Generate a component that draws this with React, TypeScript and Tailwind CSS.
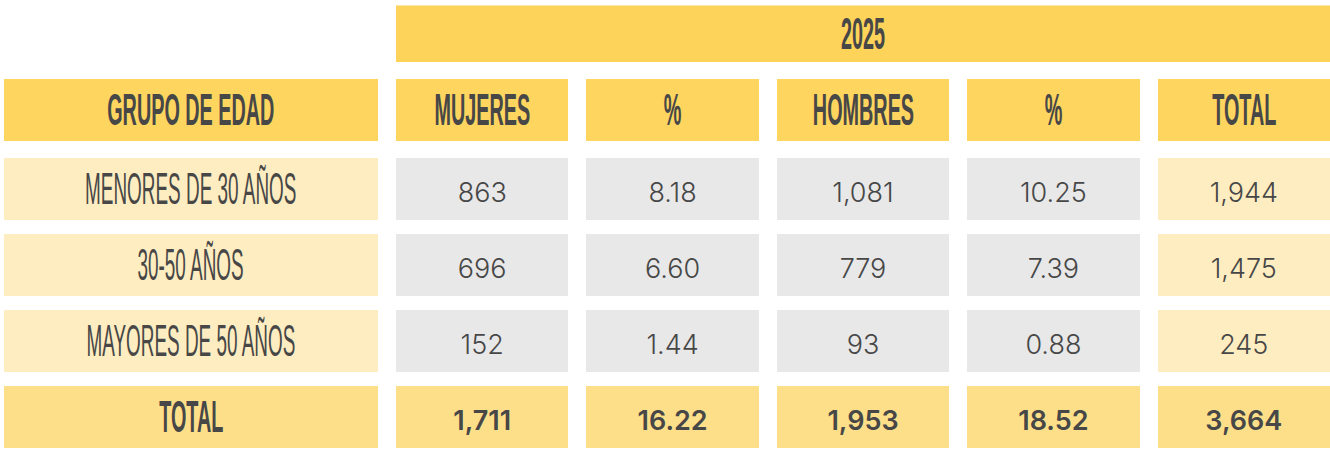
const rows = [
  { label: "MENORES DE 30 AÑOS", values: ["863", "8.18", "1,081", "10.25", "1,944"] },
  { label: "30-50 AÑOS", values: ["696", "6.60", "779", "7.39", "1,475"] },
  { label: "MAYORES DE 50 AÑOS", values: ["152", "1.44", "93", "0.88", "245"] },
];

const totals = ["1,711", "16.22", "1,953", "18.52", "3,664"];
const headers = ["MUJERES", "%", "HOMBRES", "%", "TOTAL"];

/** Narrow display type: Liberation Sans squeezed on x. */
function Cond({ children, bold }: { children: React.ReactNode; bold?: boolean }) {
  return (
    <span
      className={`inline-block origin-center whitespace-nowrap font-['Liberation_Sans',sans-serif] text-[44px] leading-none ${
        bold ? "scale-x-[0.45] font-bold" : "scale-x-[0.43] font-normal"
      }`}
    >
      {children}
    </span>
  );
}

function Cell({ className, children }: { className: string; children: React.ReactNode }) {
  return <div className={`flex h-[62px] items-center justify-center overflow-hidden ${className}`}>{children}</div>;
}

export default function App() {
  return (
    <div className="h-[450px] w-[1330px] bg-white pl-[4px] pt-[5px] text-[#474747]">
      <div className="grid grid-cols-[374px_repeat(5,1fr)] gap-x-[18px]">
        <div />
        <div className="col-span-5 flex h-[57px] items-center justify-center border-t border-[#fde7a6] bg-[#fed35a]">
          <Cond bold>2025</Cond>
        </div>
      </div>

      <div className="mt-[17px] grid grid-cols-[374px_repeat(5,1fr)] gap-x-[18px]">
        <Cell className="bg-[#fed55f]">
          <Cond bold>GRUPO DE EDAD</Cond>
        </Cell>
        {headers.map((h, i) => (
          <Cell key={i} className="bg-[#fed55f]">
            <Cond bold>{h}</Cond>
          </Cell>
        ))}
      </div>

      <div className="mt-[17px] flex flex-col gap-y-[14px]">
        {rows.map((r) => (
          <div key={r.label} className="grid grid-cols-[374px_repeat(5,1fr)] gap-x-[18px]">
            <Cell className="bg-[#feedc1]">
              <Cond>{r.label}</Cond>
            </Cell>
            {r.values.map((v, i) => (
              <Cell key={i} className={i === 4 ? "bg-[#feedc1]" : "bg-[#e8e8e8]"}>
                <span className="pt-[8px] font-['Inter',sans-serif] text-[27px] font-light">{v}</span>
              </Cell>
            ))}
          </div>
        ))}

        <div className="grid grid-cols-[374px_repeat(5,1fr)] gap-x-[18px]">
          <Cell className="bg-[#fedf89]">
            <Cond bold>TOTAL</Cond>
          </Cell>
          {totals.map((v, i) => (
            <Cell key={i} className="bg-[#fedf89]">
              <span className="pt-[8px] font-['Inter',sans-serif] text-[27px] font-semibold">{v}</span>
            </Cell>
          ))}
        </div>
      </div>
    </div>
  );
}
